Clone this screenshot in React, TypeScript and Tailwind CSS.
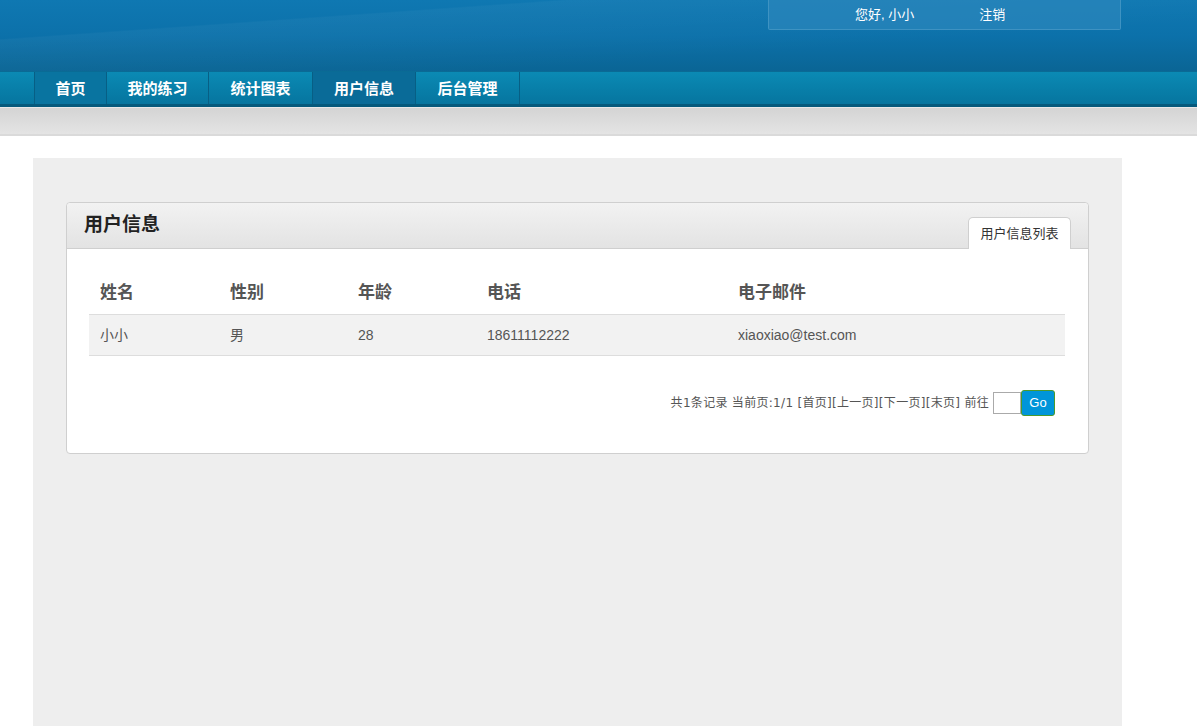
import React from "react";

const NAV = ["首页", "我的练习", "统计图表", "用户信息", "后台管理"];
const NAV_W = ["w-[73px]", "w-[102px]", "w-[104px]", "w-[103px]", "w-[104px]"];

const USERS = [
  { name: "小小", sex: "男", age: 28, phone: "18611112222", email: "xiaoxiao@test.com" },
];

export default function App() {
  const font = { fontFamily: "Arial, 'Liberation Sans', 'Noto Sans CJK SC', sans-serif" };

  return (
    <div className="min-h-[726px] bg-white text-[#555]" style={font}>
      {/* Header */}
      <div className="h-[71px] bg-gradient-to-b from-[#0f78b2] via-[#0c71aa] to-[#0a6595] relative overflow-hidden">
        <div className="absolute left-0 top-0 w-[1197px] h-[71px] bg-[linear-gradient(176deg,transparent_25%,rgba(255,255,255,0.035)_26%,transparent_70%)]" />
        <div className="w-[1089px] ml-[33px] h-full flex justify-end relative">
          <div className="w-[353px] h-[30px] mr-[1px] bg-[#2a86bb]/75 border border-t-0 border-[#4b9ac7]/70 rounded-b-[2px] flex items-center text-[13px] text-white">
            <span className="ml-[86px]">您好, 小小</span>
            <span className="ml-[65px]">注销</span>
          </div>
        </div>
      </div>

      {/* Nav */}
      <div className="h-[36px] bg-gradient-to-b from-[#0b8ab4] to-[#06759f] border-t border-[#0a6b95] border-b-[3px] border-b-[#05597c]">
        <div className="ml-[34px] flex h-full">
          {NAV.map((n, i) => (
            <div
              key={n}
              className={`${NAV_W[i]} h-full flex items-center justify-center border-r border-[#075f85] text-white font-bold text-[15px] ${
                i === 3 ? "bg-[#0a6b98]" : i === 0 ? "bg-[#0974a0] border-l" : ""
              }`}
              style={{ fontFamily: "'Noto Sans CJK SC', sans-serif" }}
            >
              {n}
            </div>
          ))}
        </div>
      </div>

      {/* Sub bar */}
      <div className="h-[29px] bg-gradient-to-b from-[#d4d4d4] to-[#e4e4e4] border-t border-[#e8e8e8] border-b-2 border-b-[#dadada]" />

      {/* Content */}
      <div className="pt-[22px]">
        <div className="ml-[33px] w-[1089px] min-h-[569px] bg-[#eeeeee] pt-[44px] px-[33px]">
          <div className="w-[1023px] bg-white border border-[#cfcfcf] rounded-[4px]">
            {/* Panel head */}
            <div className="h-[46px] bg-gradient-to-b from-[#f2f2f2] to-[#e3e3e3] border-b border-[#cfcfcf] rounded-t-[4px] flex items-end justify-between pl-[17px] pr-[17px]">
              <h2 className="self-center text-[19px] font-bold text-[#222]">用户信息</h2>
              <div className="h-[32px] w-[103px] -mb-px bg-white border border-b-0 border-[#cfcfcf] rounded-t-[5px] flex items-center justify-center text-[13px] text-[#333]">
                用户信息列表
              </div>
            </div>

            {/* Table */}
            <div className="px-[22px] pt-[21px] pb-[37px]">
              <table className="w-[976px] border-collapse text-left">
                <thead>
                  <tr className="h-[44px]">
                    <th className="w-[130px] pl-[11px] pt-[2px] text-[17px] font-bold">姓名</th>
                    <th className="w-[128px] pl-[11px] pt-[2px] text-[17px] font-bold">性别</th>
                    <th className="w-[129px] pl-[11px] pt-[2px] text-[17px] font-bold">年龄</th>
                    <th className="w-[251px] pl-[11px] pt-[2px] text-[17px] font-bold">电话</th>
                    <th className="pl-[11px] pt-[2px] text-[17px] font-bold">电子邮件</th>
                  </tr>
                </thead>
                <tbody>
                  {USERS.map((u) => (
                    <tr key={u.phone} className="h-[41px] bg-[#f2f2f2] border-t border-b border-[#dddddd] text-[14px]">
                      <td className="pl-[11px] pt-[2px]">{u.name}</td>
                      <td className="pl-[11px] pt-[2px]">{u.sex}</td>
                      <td className="pl-[11px] pt-[2px]">{u.age}</td>
                      <td className="pl-[11px] pt-[2px]">{u.phone}</td>
                      <td className="pl-[11px] pt-[2px]">{u.email}</td>
                    </tr>
                  ))}
                </tbody>
              </table>

              {/* Pagination */}
              <div className="mt-[34px] pr-[11px] flex items-center justify-end text-[12px] text-[#555]">
                <span
                  className="tracking-[0.3px]"
                  style={{ fontFamily: "'DejaVu Sans', 'Noto Sans CJK SC', sans-serif" }}
                >
                  共1条记录 当前页:1/1 [首页][上一页][下一页][末页] 前往
                </span>
                <input className="ml-[4px] w-[28px] h-[22px] border border-[#aaa] bg-white" />
                <button className="w-[34px] h-[26px] bg-[#0095d9] border border-[#4b9a2c] rounded-[3px] text-white text-[13px]">
                  Go
                </button>
              </div>
            </div>
          </div>
        </div>
      </div>
    </div>
  );
}
